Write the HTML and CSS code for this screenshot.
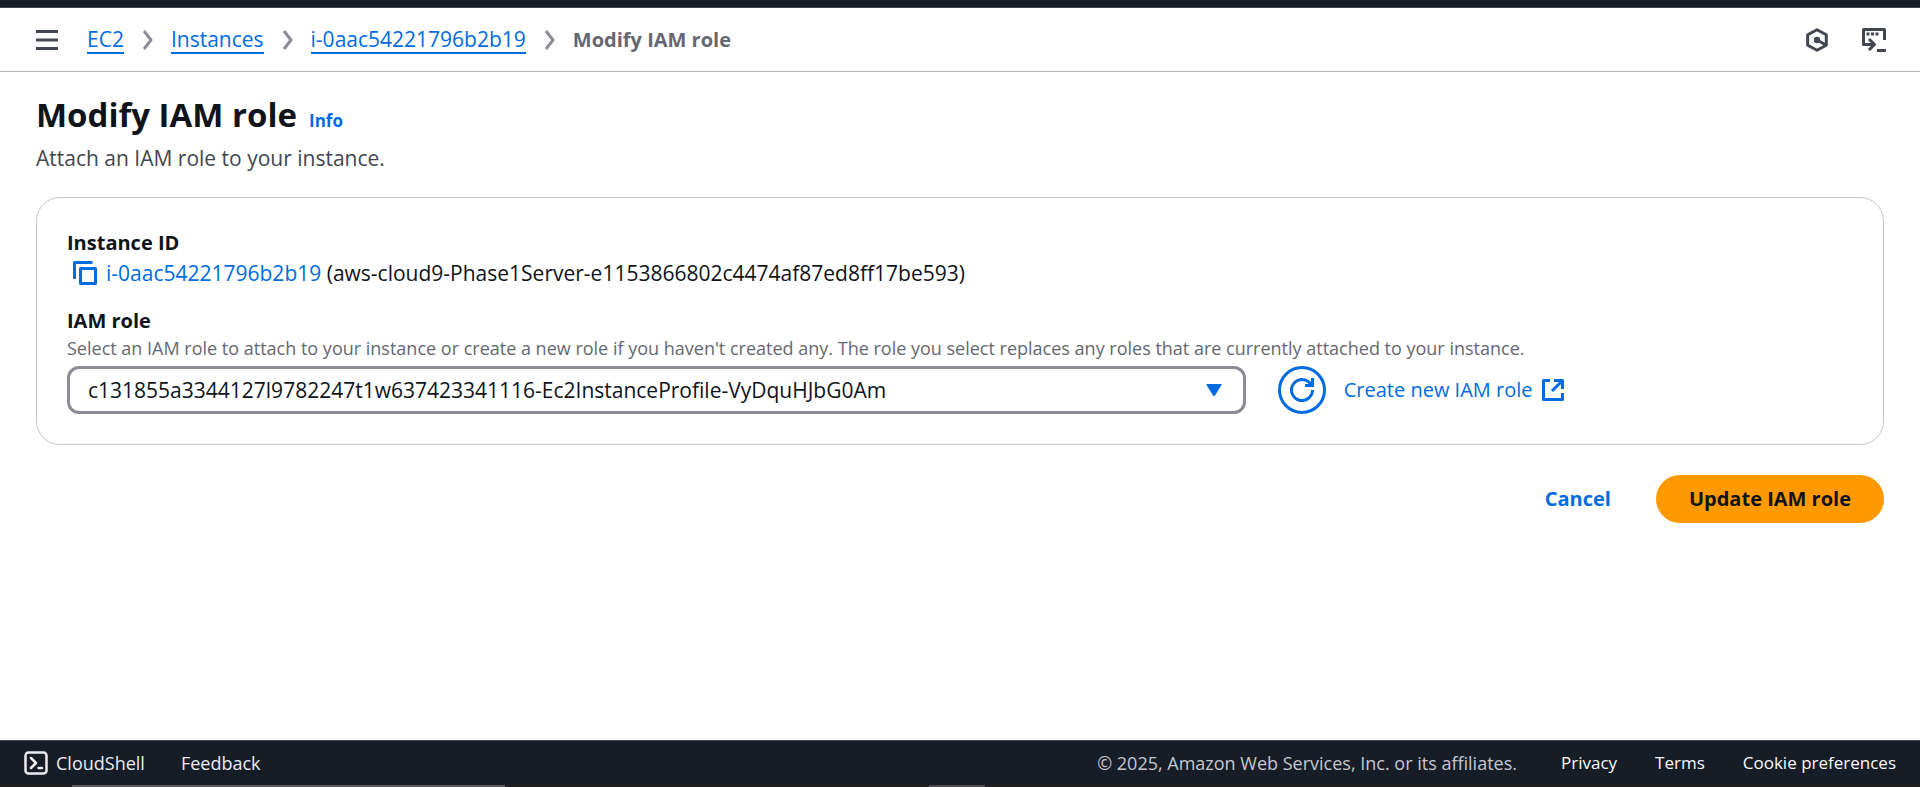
FILE: index.html
```html
<!DOCTYPE html>
<html lang="en">
<head>
<meta charset="utf-8">
<title>Modify IAM role | EC2</title>
<link rel="stylesheet" href="styles.css">
</head>
<body>
<div class="page">
  <div class="topbar"></div>
  <header class="navbar">
    <button class="icon-button menu-button" type="button" aria-label="Open navigation">
      <svg width="24" height="24" viewBox="0 0 24 24" fill="none" stroke="currentColor" stroke-width="3"><path d="M1 3.500H23M1 12H23M1 20.500H23"/></svg>
    </button>
    <nav aria-label="Breadcrumbs">
      <ol class="crumbs">
        <li><a href="#">EC2</a></li>
        <li><svg class="chevron" viewBox="0 0 12 20"><path d="M2 1L9 10L2 19"/></svg><a href="#">Instances</a></li>
        <li><svg class="chevron" viewBox="0 0 12 20"><path d="M2 1L9 10L2 19"/></svg><a href="#">i-0aac54221796b2b19</a></li>
        <li><svg class="chevron" viewBox="0 0 12 20"><path d="M2 1L9 10L2 19"/></svg><span class="current">Modify IAM role</span></li>
      </ol>
    </nav>
    <div class="tools">
      <button class="icon-button" type="button" aria-label="Amazon Q">
        <svg width="24" height="24" viewBox="0 0 24 24" fill="none" stroke="currentColor" stroke-width="3"><path d="M12 1.800L21.300 6.800V17.200L12 22.200L2.700 17.200V6.800Z" stroke-linejoin="round"/><path d="M12 12L21 17"/><circle cx="12" cy="12" r="3.200" fill="currentColor" stroke="none"/></svg>
      </button>
      <button class="icon-button" type="button" aria-label="Console to code">
        <svg width="24" height="24" viewBox="0 0 24 24" fill="none" stroke="currentColor" stroke-width="3" stroke-linejoin="round"><path d="M22.500 12V1.500H1.500V16.500H13M7 11L12.500 16.500L7 22M15 22.500H24"/><path d="M4.500 6H17" stroke-dasharray="3 1.500"/></svg>
      </button>
    </div>
  </header>

  <main class="content">
    <div class="heading">
      <h1>Modify IAM role</h1>
      <a class="info" href="#">Info</a>
    </div>
    <p class="lead">Attach an IAM role to your instance.</p>

    <section class="card">
      <div class="field">
        <h2 class="label">Instance ID</h2>
        <div class="instance">
          <button class="icon-button copy" type="button" aria-label="Copy instance ID">
            <svg width="24" height="24" viewBox="0 0 24 24" fill="none" stroke="currentColor" stroke-width="3" stroke-linejoin="round"><path d="M1.500 18V1.500H19.500M7.500 7.500H22.500V22.500H7.500Z"/></svg>
          </button>
          <span><a href="#">i-0aac54221796b2b19</a> (aws-cloud9-Phase1Server-e1153866802c4474af87ed8ff17be593)</span>
        </div>
      </div>
      <div class="field">
        <label class="label" for="role">IAM role</label>
        <p class="hint" id="role-hint">Select an IAM role to attach to your instance or create a new role if you haven't created any. The role you select replaces any roles that are currently attached to your instance.</p>
        <div class="role-row">
          <div class="select-wrap">
            <select id="role" aria-describedby="role-hint"><option>c131855a3344127l9782247t1w637423341116-Ec2InstanceProfile-VyDquHJbG0Am</option></select>
            <svg class="caret" width="16" height="12" viewBox="0 0 16 12"><path d="M1 0H15Q16 0 15.500 1L9 11.500Q8 12.500 7 11.500L.5 1Q0 0 1 0Z" fill="currentColor"/></svg>
          </div>
          <button class="refresh" type="button" aria-label="Refresh roles">
            <svg width="24" height="24" viewBox="0 0 24 24" fill="none" stroke="currentColor" stroke-width="3"><path d="M22.500 12A10.500 10.500 0 1 1 19 4.200L22 7.500M22.500 0V7.500H15"/></svg>
          </button>
          <a class="create" href="#"><span>Create new IAM role</span>
            <svg width="24" height="24" viewBox="0 0 24 24" fill="none" stroke="currentColor" stroke-width="3"><path d="M9 2.500H2.500V21.500H21.500V15M13 2.500H21.500V11M21.500 2.500L11 13" stroke-linejoin="round"/></svg>
          </a>
        </div>
      </div>
    </section>

    <div class="actions">
      <button class="cancel" type="button">Cancel</button>
      <button class="primary" type="button">Update IAM role</button>
    </div>
  </main>

  <footer class="footer">
    <button class="foot-button" type="button">
      <svg width="24" height="24" viewBox="0 0 24 24" fill="none" stroke="currentColor" stroke-width="2.500" stroke-linecap="round" stroke-linejoin="round"><rect x="1.500" y="1.500" width="21" height="21" rx="3"/><path d="M7 7L12 12L7 17M14.500 17H18"/></svg>
      <span>CloudShell</span>
    </button>
    <button class="foot-button" type="button">Feedback</button>
    <div class="legal">
      <span class="copyright">© 2025, Amazon Web Services, Inc. or its affiliates.</span>
      <a href="#">Privacy</a>
      <a href="#">Terms</a>
      <a href="#">Cookie preferences</a>
    </div>
  </footer>
  <div class="taskbar"><span class="task-a"></span><span class="task-b"></span></div>
</div>
</body>
</html>
```
FILE: styles.css
```css
* { box-sizing: border-box; }
body {
  margin: 0;
  background: #fff;
  color: #0f141a;
  font: 21px/30px "Open Sans", "Noto Sans", sans-serif;
}
h1, h2, p, ol { margin: 0; padding: 0; }
a { color: #006ce0; text-decoration: none; }
button { font: inherit; padding: 0; border: 0; background: none; cursor: pointer; }
svg { display: block; flex: none; }
.page { min-height: 100vh; display: flex; flex-direction: column; }
.topbar { height: 8px; background: #161d26; border-bottom: 1px solid #424650; }
.navbar {
  display: flex;
  align-items: center;
  height: 64px;
  padding: 0 34px 0 35px;
  border-bottom: 1px solid #b4b4bb;
}
.icon-button { color: #424650; }
.menu-button { margin-right: 28px; }
.crumbs { display: flex; list-style: none; }
.crumbs li { display: flex; align-items: center; }
.crumbs a { border-bottom: 2px solid #006ce0; line-height: 26px; }
.current { color: #656871; font-weight: 700; font-size: 20px; }
.chevron { width: 12px; height: 20px; margin: 0 17px 0 18px; fill: none; stroke: #8c8c94; stroke-width: 3; }
.tools { display: flex; align-items: center; gap: 33px; margin-left: auto; }
.content { flex: 1; padding: 20px 36px 0; }
.heading { display: flex; align-items: baseline; gap: 12px; }
h1 { font-size: 33px; line-height: 45px; font-weight: 700; }
.info { font-size: 17px; font-weight: 700; }
.lead { margin-top: 6px; color: #424650; }
.card { margin-top: 24px; padding: 30px; border: 1px solid #c6c6cd; border-radius: 24px; }
.field + .field { margin-top: 18px; }
.label { display: block; font-size: 20px; line-height: 30px; font-weight: 700; }
.instance { display: flex; align-items: center; gap: 9px; padding-left: 6px; }
.copy { color: #006ce0; }
.hint { color: #656871; font-size: 18px; line-height: 24px; }
.role-row { display: flex; align-items: center; margin-top: 6px; }
.select-wrap { position: relative; width: 66%; }
select {
  width: 100%;
  height: 48px;
  padding: 0 60px 0 18px;
  border: 3px solid #8c8c94;
  border-radius: 12px;
  appearance: none;
  background: #fff;
  color: #0f141a;
  font: inherit;
}
.caret { position: absolute; right: 24px; top: 18px; color: #006ce0; pointer-events: none; }
.refresh {
  display: grid;
  place-items: center;
  width: 48px;
  height: 48px;
  margin: 0 18px 0 32px;
  border: 3px solid #006ce0;
  border-radius: 50%;
  color: #006ce0;
}
.create { display: flex; align-items: center; gap: 8px; font-size: 20px; }
.actions { display: flex; justify-content: flex-end; gap: 45px; margin-top: 30px; }
.cancel { color: #006ce0; font-size: 20px; font-weight: 700; }
.primary {
  height: 48px;
  padding: 0 33px;
  border-radius: 24px;
  background: #ff9900;
  color: #0f141a;
  font-size: 20px;
  font-weight: 700;
}
.footer {
  display: flex;
  align-items: center;
  gap: 36px;
  height: 45px;
  padding: 0 24px;
  border-top: 1px solid #424650;
  background: #161d26;
  color: #ebebf0;
  font-size: 18px;
}
.foot-button { display: flex; align-items: center; gap: 8px; color: #ebebf0; }
.legal { display: flex; gap: 38px; margin-left: auto; }
.legal a { color: #f9f9fa; font-size: 17px; font-weight: 500; }
.copyright { margin-right: 6px; color: #c6c6cd; }
.taskbar { display: flex; gap: 424px; height: 2px; padding-left: 72px; background: #261c1c; }
.task-a { width: 433px; background: #5a5a5c; }
.task-b { width: 56px; background: #4a4a4c; }
```
